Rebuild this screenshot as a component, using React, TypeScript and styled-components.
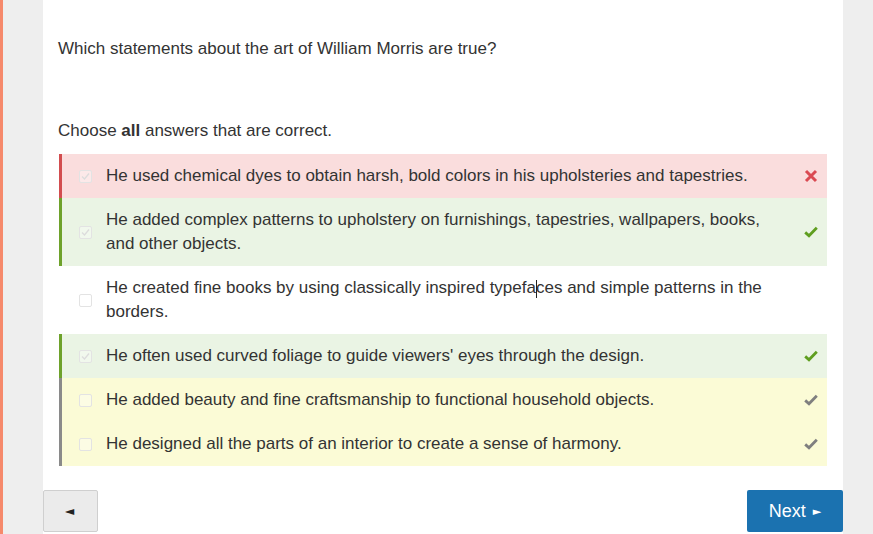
import React from "react";
import styled, { createGlobalStyle } from "styled-components";

const Global = createGlobalStyle`
  html, body { margin: 0; padding: 0; background: #eeeeee; }
  body { font-family: "Liberation Sans", Arial, sans-serif; color: #333333; }
  * { box-sizing: border-box; }
`;

const Page = styled.div`
  display: flex;
  height: 534px;
  overflow: hidden;
  background: #eeeeee;
`;

const Stripe = styled.div`
  width: 3px;
  flex: none;
  background: #f6896b;
`;

const Gutter = styled.div`
  width: 40px;
  flex: none;
`;

const Panel = styled.main`
  width: 800px;
  flex: none;
  background: #ffffff;
  padding: 37px 16px 0 15px;
  display: flex;
  flex-direction: column;
`;

const Question = styled.p`
  margin: 0 0 58px;
  font-size: 17px;
  line-height: 24px;
`;

const Instruction = styled.p`
  margin: 0 0 11px;
  font-size: 17px;
  line-height: 24px;
`;

const Options = styled.ul`
  list-style: none;
  margin: 0 0 0 1px;
  padding: 0;
  display: flex;
  flex-direction: column;
`;

type Tone = "wrong" | "right" | "none" | "missed";

const tones: Record<Tone, { bg: string; border: string }> = {
  wrong: { bg: "#fadddd", border: "#d24d4f" },
  right: { bg: "#eaf4e4", border: "#6ea22b" },
  none: { bg: "#ffffff", border: "transparent" },
  missed: { bg: "#fbfbd6", border: "#8a8a8a" },
};

const Option = styled.li<{ $tone: Tone }>`
  display: flex;
  align-items: center;
  background: ${(p) => tones[p.$tone].bg};
  border-left: 3px solid ${(p) => tones[p.$tone].border};
  padding: 10px 8px 10px 17px;
  font-size: 17px;
  line-height: 24px;
`;

const Box = styled.span`
  width: 13px;
  height: 13px;
  flex: none;
  border: 1px solid #e3e3e3;
  border-radius: 2px;
  background: rgba(255, 255, 255, 0.35);
  margin-right: 14px;
  display: flex;
  align-items: center;
  justify-content: center;
`;

const Label = styled.span`
  flex: 1;
`;

const Word = styled.span`
  position: relative;
  &::after {
    content: "";
    position: absolute;
    left: 100%;
    top: 2px;
    width: 1px;
    height: 18px;
    background: #222;
  }
`;

const Mark = styled.span`
  width: 16px;
  flex: none;
  margin-left: 22px;
  display: flex;
  justify-content: center;
`;

const Nav = styled.div`
  margin: 24px -16px 0 -15px;
  display: flex;
  justify-content: space-between;
`;

const PrevButton = styled.button`
  width: 55px;
  height: 42px;
  background: #ebebeb;
  border: 1px solid #cfcfcf;
  border-radius: 2px;
  color: #222;
  font-size: 12px;
  font-family: "DejaVu Sans", sans-serif;
  padding: 0 2px 0 0;
  display: flex;
  align-items: center;
  justify-content: center;
`;

const NextButton = styled.button`
  width: 96px;
  height: 42px;
  background: #1b72b0;
  border: none;
  border-radius: 2px;
  color: #ffffff;
  font-family: "Liberation Sans", Arial, sans-serif;
  font-size: 18px;
  display: flex;
  align-items: center;
  justify-content: center;
  gap: 7px;
`;

const Tri = styled.span`
  font-family: "DejaVu Sans", sans-serif;
  font-size: 11px;
`;

const TickBox = () => (
  <svg width="11" height="11" viewBox="0 0 11 11">
    <path d="M2 5.5 L4.5 8 L9 2.5" fill="none" stroke="#dcdcdc" strokeWidth="1.3" />
  </svg>
);

const Check = ({ color }: { color: string }) => (
  <svg width="14" height="12" viewBox="0 0 14 12">
    <path d="M1.2 6.4 L5 9.8 L12.8 1.8" fill="none" stroke={color} strokeWidth="2.8" strokeLinejoin="miter" />
  </svg>
);

const Cross = () => (
  <svg width="14" height="14" viewBox="0 0 14 14">
    <path d="M2 2 L12 12 M12 2 L2 12" stroke="#da4a52" strokeWidth="3" />
  </svg>
);

type Item = { tone: Tone; checked: boolean; text: React.ReactNode; mark: React.ReactNode };

const items: Item[] = [
  {
    tone: "wrong",
    checked: true,
    text: "He used chemical dyes to obtain harsh, bold colors in his upholsteries and tapestries.",
    mark: <Cross />,
  },
  {
    tone: "right",
    checked: true,
    text: "He added complex patterns to upholstery on furnishings, tapestries, wallpapers, books, and other objects.",
    mark: <Check color="#5f9e1f" />,
  },
  {
    tone: "none",
    checked: false,
    text: (
      <>
        He created fine books by using classically inspired <Word>typefa</Word>ces and simple patterns in the borders.
      </>
    ),
    mark: null,
  },
  {
    tone: "right",
    checked: true,
    text: "He often used curved foliage to guide viewers' eyes through the design.",
    mark: <Check color="#5f9e1f" />,
  },
  {
    tone: "missed",
    checked: false,
    text: "He added beauty and fine craftsmanship to functional household objects.",
    mark: <Check color="#7f7f7f" />,
  },
  {
    tone: "missed",
    checked: false,
    text: "He designed all the parts of an interior to create a sense of harmony.",
    mark: <Check color="#7f7f7f" />,
  },
];

export default function App() {
  return (
    <>
      <Global />
      <Page>
        <Stripe />
        <Gutter />
        <Panel>
          <Question>Which statements about the art of William Morris are true?</Question>
          <Instruction>
            Choose <b>all</b> answers that are correct.
          </Instruction>
          <Options>
            {items.map((it, i) => (
              <Option key={i} $tone={it.tone}>
                <Box>{it.checked ? <TickBox /> : null}</Box>
                <Label>{it.text}</Label>
                <Mark>{it.mark}</Mark>
              </Option>
            ))}
          </Options>
          <Nav>
            <PrevButton aria-label="Previous">◄</PrevButton>
            <NextButton>
              Next <Tri>►</Tri>
            </NextButton>
          </Nav>
        </Panel>
      </Page>
    </>
  );
}
